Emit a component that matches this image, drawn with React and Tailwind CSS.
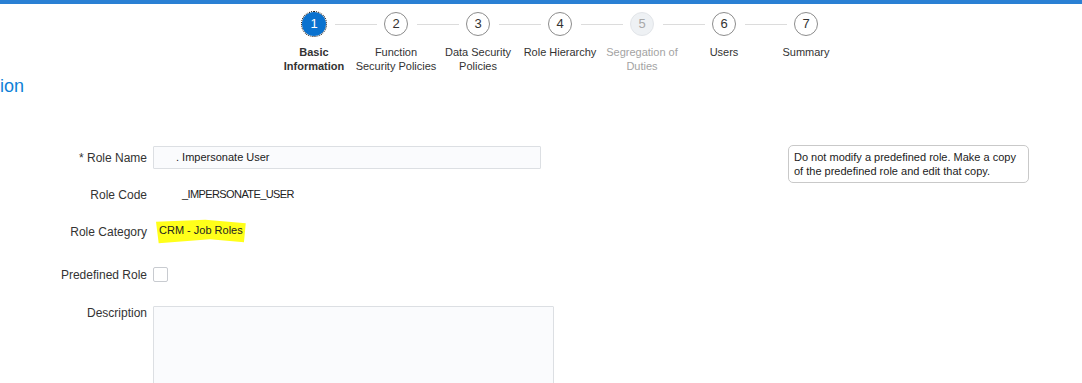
import React from 'react';

const steps = [
  { n: 1, lines: ['Basic', 'Information'], state: 'active' },
  { n: 2, lines: ['Function', 'Security Policies'] },
  { n: 3, lines: ['Data Security', 'Policies'] },
  { n: 4, lines: ['Role Hierarchy'] },
  { n: 5, lines: ['Segregation of', 'Duties'], state: 'disabled' },
  { n: 6, lines: ['Users'] },
  { n: 7, lines: ['Summary'] },
];

function StepCircle({ step }) {
  if (step.state === 'active') {
    return (
      <div className="w-[24px] h-[24px] rounded-full bg-[#0a72cf] text-white text-[13px] flex items-center justify-center outline-1 outline-dotted outline-black">
        {step.n}
      </div>
    );
  }
  if (step.state === 'disabled') {
    return (
      <div className="w-[24px] h-[24px] rounded-full bg-[#eef1f4] border border-[#e2e5e9] text-[#a8a8a8] text-[13px] flex items-center justify-center">
        {step.n}
      </div>
    );
  }
  return (
    <div className="w-[24px] h-[24px] rounded-full bg-white border border-[#8c8c8c] text-[#333] text-[13px] flex items-center justify-center">
      {step.n}
    </div>
  );
}

function Stepper() {
  return (
    <div className="ml-[273px]">
      <div className="flex items-center mt-[8px] ml-[29px]">
        {steps.map((s, i) => (
          <React.Fragment key={s.n}>
            <StepCircle step={s} />
            {i < steps.length - 1 && (
              <div className="w-[58px] flex items-center pl-[9px] pr-[7px]">
                <div className="h-px w-full bg-[#dcdcdc]" />
              </div>
            )}
          </React.Fragment>
        ))}
      </div>
      <div className="flex mt-[9px] h-[29px]">
        {steps.map((s) => (
          <div
            key={s.n}
            className={
              'w-[82px] flex flex-col items-center text-[11px] leading-[14px] ' +
              (s.state === 'active'
                ? 'font-bold text-[#333]'
                : s.state === 'disabled'
                ? 'text-[#a3a3a3]'
                : 'text-[#333]')
            }
          >
            {s.lines.map((l) => (
              <span key={l} className="whitespace-nowrap">{l}</span>
            ))}
          </div>
        ))}
      </div>
    </div>
  );
}

function Row({ label, children, className = '' }) {
  return (
    <div className={'flex items-center h-[23px] ' + className}>
      <div className="w-[147px] shrink-0 text-right text-[12px] text-[#333]">{label}</div>
      <div className="ml-[6px] flex items-center">{children}</div>
    </div>
  );
}

export default function App() {
  return (
    <div className="w-[1082px] h-[383px] overflow-hidden bg-white font-['Liberation_Sans',Arial,sans-serif]">
      <div className="h-[4px] bg-[#2a80d4]" />
      <Stepper />

      <div className="mt-[1px] text-[18px] leading-[22px] text-[#0f7fd7]">ion</div>

      <div className="flex mt-[49px]">
        <div className="w-[554px] shrink-0">
          <Row label="* Role Name">
            <div className="w-[388px] h-[23px] border border-[#dcdfe3] bg-[#fafbfd] rounded-[1px] flex items-center pl-[22px] text-[11px] text-[#222]">
              . Impersonate User
            </div>
          </Row>

          <Row label="Role Code" className="mt-[14px]">
            <div className="w-[29px] shrink-0" />
            <span className="text-[11px] text-[#222] tracking-[-0.6px]">_IMPERSONATE_USER</span>
          </Row>

          <Row label="Role Category" className="mt-[14px]">
            <span className="inline-block bg-[#ffff1a] ml-[3px] px-[3px] pt-[3px] pb-[6px] text-[11px] text-[#222] [clip-path:polygon(0_12%,55%_4%,100%_18%,98%_92%,60%_80%,3%_96%)]">
              CRM - Job Roles
            </span>
          </Row>

          <Row label="Predefined Role" className="mt-[20px]">
            <div className="w-[15px] h-[15px] border border-[#c8cbd0] rounded-[2px] bg-white" />
          </Row>

          <div className="flex items-start mt-[20px]">
            <div className="w-[147px] shrink-0 text-right text-[12px] leading-[14px] text-[#333]">Description</div>
            <div className="ml-[6px] w-[401px] h-[90px] border border-[#dcdfe3] bg-[#fafbfd] rounded-[1px]" />
          </div>
        </div>

        <div className="ml-[234px] -mt-[1px] self-start w-[241px] border border-[#c9c9c9] rounded-[5px] px-[5px] py-[4px] text-[11px] leading-[14px] text-[#222]">
          Do not modify a predefined role. Make a copy
          <br />
          of the predefined role and edit that copy.
        </div>
      </div>
    </div>
  );
}
